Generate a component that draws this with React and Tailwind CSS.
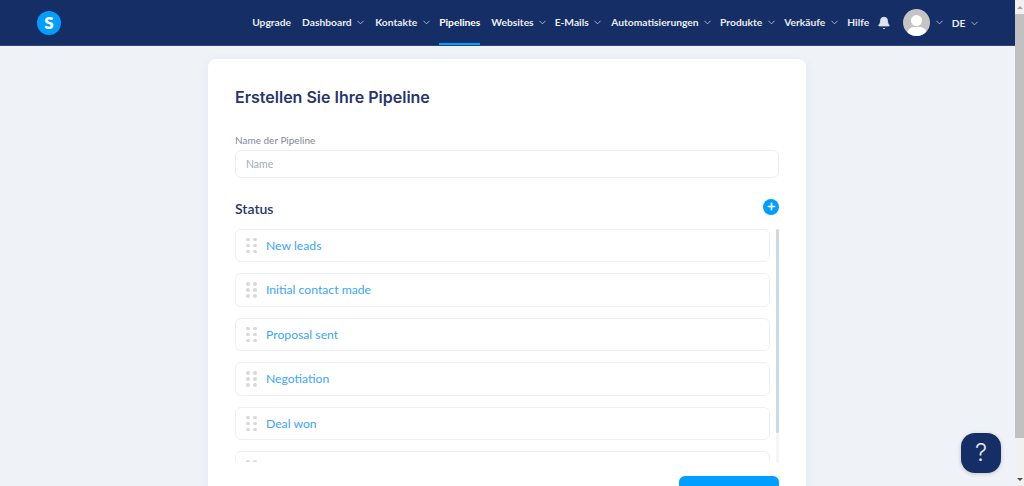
import { ChevronDown, Bell, Plus } from 'lucide-react';

const NAV = [
  { label: 'Upgrade', cls: 'mr-[11px]' },
  { label: 'Dashboard', caret: true, cls: 'mr-[9px]' },
  { label: 'Kontakte', caret: true, cls: 'mr-[7.5px]' },
  { label: 'Pipelines', active: true, cls: 'mr-[11px]' },
  { label: 'Websites', caret: true, cls: 'mr-[6.5px]' },
  { label: 'E-Mails', caret: true, cls: 'mr-[8px]' },
  { label: 'Automatisierungen', caret: true, cls: 'mr-[7px]' },
  { label: 'Produkte', caret: true, cls: 'mr-[7.5px]' },
  { label: 'Verkäufe', caret: true, cls: 'mr-[7.5px]' },
  { label: 'Hilfe', cls: 'mr-[8px]' },
];

// the sixth row is cut off by the list before its label shows
const STAGES = ['New leads', 'Initial contact made', 'Proposal sent', 'Negotiation', 'Deal won', ''];

function Caret() {
  return <ChevronDown className="w-[11px] h-[11px] ml-[3.5px] text-[#c5cede]" strokeWidth={1.75} />;
}

function Grip() {
  return (
    <div className="grid grid-cols-2 gap-x-[3.5px] gap-y-[2.5px] w-fit shrink-0">
      {[0, 1, 2, 3, 4, 5].map(i => (
        <span key={i} className="w-[3.5px] h-[3.5px] rounded-full bg-[#d9d9d9]" />
      ))}
    </div>
  );
}

export default function App() {
  return (
    <div className="h-[486px] overflow-hidden flex bg-[#eff3f8] font-['Inter',sans-serif]">
      <div className="w-[1015px] shrink-0 flex flex-col relative">
        <header className="h-[46px] shrink-0 bg-[#152e66] border-b border-[#2f4677] flex items-stretch pl-[37px]">
          <div className="self-center w-6 h-6 rounded-full bg-[#009fff] flex items-center justify-center text-white font-extrabold text-[17px] leading-none font-['Lato',sans-serif]">
            S
          </div>
          <nav className="ml-auto flex items-stretch text-[10.25px] font-bold text-[#e8ecf3] font-['Lato',sans-serif]">
            {NAV.map(item => (
              <div
                key={item.label}
                className={`flex items-center h-full pt-[2px] border-b-2 ${item.active ? 'border-[#009fff] text-white' : 'border-transparent'} ${item.cls}`}
              >
                <span>{item.label}</span>
                {item.caret && <Caret />}
              </div>
            ))}
            <div className="flex items-center mr-[12px]">
              <Bell className="w-[14px] h-[14px] text-[#dfe4ec]" fill="currentColor" strokeWidth={1.5} />
            </div>
            <div className="flex items-center mr-[7px]">
              <div className="w-[27px] h-[27px] rounded-full bg-[#c4c4c4] overflow-hidden flex flex-col items-center">
                <span className="w-[11px] h-[11px] rounded-full bg-white mt-[6px] shrink-0" />
                <span className="w-[20px] h-[14px] rounded-full bg-white mt-[1px] shrink-0" />
              </div>
              <Caret />
            </div>
            <div className="flex items-center pt-[2px] mr-[35px]">
              <span>DE</span>
              <Caret />
            </div>
          </nav>
        </header>

        <main className="flex-1 min-h-0 overflow-hidden flex pl-[208px] pt-[13px]">
          <section className="w-[598px] h-[480px] shrink-0 bg-white rounded-[8px] shadow-[0_2px_12px_rgba(30,50,100,0.06)] pl-[27px] pr-[26.7px] pt-[28px]">
            <h1 className="text-[16px] leading-5 font-semibold text-[#27366b]">Erstellen Sie Ihre Pipeline</h1>

            <label className="block mt-[26px] text-[10px] leading-[14px] text-[#7f8a9c] font-['Lato',sans-serif]">Name der Pipeline</label>
            <div className="mt-[3px] h-[28px] border border-[#eceef2] rounded-[6px] flex items-center pl-[10px] pt-[1px] text-[10.5px] text-[#a5acb8] font-['Lato',sans-serif]">
              Name
            </div>

            <div className="mt-[20px] h-[20px] flex items-center justify-between">
              <h2 className="text-[14px] font-semibold text-[#27366b] font-['Lato',sans-serif]">Status</h2>
              <div className="w-4 h-4 rounded-full bg-[#009fff] flex items-center justify-center -mt-[3px]">
                <Plus className="w-[11px] h-[11px] text-white" strokeWidth={3.5} />
              </div>
            </div>

            <div className="mt-[10.5px] h-[233px] flex gap-[6px]">
              <div className="flex-1 min-w-0 overflow-hidden flex flex-col gap-[11px]">
                {STAGES.map((stage, i) => (
                  <div key={i} className="h-[33.5px] shrink-0 border border-[#eeeff2] rounded-[6px] flex items-center pl-[10px] gap-[9.5px]">
                    <Grip />
                    {stage && <span className="pt-[1px] text-[12.2px] text-[#3ba5fb] font-['Lato',sans-serif]">{stage}</span>}
                  </div>
                ))}
              </div>
              <div className="w-[3px] bg-[#f4f5f7] shrink-0">
                <div className="h-[204px] bg-[#cfd8e6] rounded-full" />
              </div>
            </div>

            <div className="mt-[14px] flex justify-end">
              <button type="button" className="w-[100px] h-[36px] bg-[#009fff] rounded-[6px]" />
            </div>
          </section>
        </main>

        <button
          type="button"
          className="absolute left-[961px] top-[433px] w-[40px] h-[40px] rounded-[14px] bg-[#152e66] shadow-[0_1px_4px_rgba(0,0,0,0.2)] text-[#e5e9f0] text-[24px] font-light leading-none flex items-center justify-center"
        >
          ?
        </button>
      </div>

      <div className="w-[9px] shrink-0 bg-[#f1f1f1] flex flex-col">
        <div className="h-[14px] shrink-0 flex items-center justify-center">
          <span className="w-0 h-0 border-x-[3px] border-x-transparent border-b-[3px] border-b-[#a3a3a3]" />
        </div>
        <div className="h-[424px] shrink-0 bg-[#c1c1c1]" />
        <div className="flex-1 flex items-end justify-center pb-[5px]">
          <span className="w-0 h-0 border-x-[3px] border-x-transparent border-t-[3px] border-t-[#505050]" />
        </div>
      </div>
    </div>
  );
}
